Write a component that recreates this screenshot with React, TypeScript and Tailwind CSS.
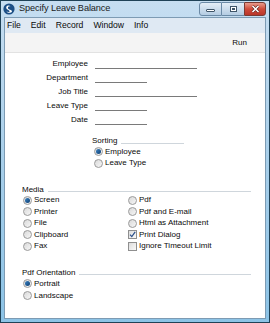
const font = { fontFamily: '"Liberation Sans", Arial, sans-serif' }

function Radio({ on }: { on?: boolean }) {
  return (
    <span className="flex h-[9px] w-[9px] shrink-0 items-center justify-center rounded-full border border-[#9a9a9a] bg-gradient-to-br from-[#d9d9d9] to-[#f7f7f7]">
      {on && <span className="h-[5px] w-[5px] rounded-full bg-gradient-to-br from-[#3b83c4] to-[#0e3f72]" />}
    </span>
  )
}

function Check({ on }: { on?: boolean }) {
  return (
    <span className="flex h-[9px] w-[9px] shrink-0 items-center justify-center border border-[#8f8f8f] bg-gradient-to-br from-[#dcdcdc] to-[#fafafa]">
      {on && (
        <svg width="7" height="7" viewBox="0 0 7 7">
          <path d="M1 3.6 L2.8 5.6 L6.2 0.8" fill="none" stroke="#2a4f8a" strokeWidth="1.2" />
        </svg>
      )}
    </span>
  )
}

function Option({ label, on, box }: { label: string; on?: boolean; box?: boolean }) {
  return (
    <div className="flex h-[11.4px] items-center gap-[2px]">
      {box ? <Check on={on} /> : <Radio on={on} />}
      <span className="whitespace-nowrap">{label}</span>
    </div>
  )
}

function Field({ label, long }: { label: string; long?: boolean }) {
  return (
    <div className="flex h-[14px] items-center">
      <span className="w-[83px] text-right">{label}</span>
      <div className={`ml-[7px] h-[9px] border-b border-[#7a7a7a] ${long ? 'w-[102px]' : 'w-[52px]'}`} />
    </div>
  )
}

function Group({ title, children }: { title: string; children: React.ReactNode }) {
  return (
    <div>
      <div className="flex h-[10px] items-center gap-[4px]">
        <span className="whitespace-nowrap">{title}</span>
        <div className="mt-[4px] h-px flex-1 bg-[#cfd6dc]" />
      </div>
      {children}
    </div>
  )
}

export default function App() {
  const menu = ['File', 'Edit', 'Record', 'Window', 'Info']

  return (
    <div className="flex h-[323px] w-[270px] flex-col border border-[#1f4257] bg-gradient-to-b from-[#c6def1] via-[#a8cfea] to-[#8cc3e6] text-[#0a0a0a]" style={font}>
      <div className="flex h-[16px] items-center pl-[2px] pr-[3px]">
        <svg width="12" height="12" viewBox="0 0 12 12">
          <circle cx="6" cy="6" r="5.6" fill="#1c4f86" />
          <path d="M3.2 4.2 C3.5 2.2 6.5 1.8 7.6 3.4 C6 2.9 4.6 3.6 5 5.2 C5.4 6.8 8.8 6.4 9 8.4 C8.2 10.2 4.8 10.4 3.4 8.6 C5 9.4 7 9 6.6 8 C6 6.8 3 6.6 3.2 4.2 Z" fill="#fff" />
        </svg>
        <span className="ml-[4px] text-[9.2px] tracking-[-0.1px] text-[#1a1a1a]">Specify Leave Balance</span>
        <div className="ml-auto flex h-[14px] items-stretch">
          <div className="flex w-[23px] items-center justify-center rounded-l-[3px] border border-[#6b8aa6] bg-gradient-to-b from-[#e4eef7] to-[#b4cce2]">
            <span className="mt-[3px] h-[3px] w-[9px] rounded-[1px] border border-[#3f5568] bg-white" />
          </div>
          <div className="flex w-[22px] items-center justify-center border-y border-[#6b8aa6] bg-gradient-to-b from-[#e4eef7] to-[#b4cce2]">
            <span className="h-[6px] w-[7px] border border-[#3f5568] bg-white">
              <span className="m-[1px] block h-[2px] w-[3px] border border-[#3f5568]" />
            </span>
          </div>
          <div className="flex w-[22px] items-center justify-center rounded-r-[3px] border border-[#7a3b33] bg-gradient-to-b from-[#e89a8c] via-[#cf4b3a] to-[#b9362a]">
            <svg width="9" height="8" viewBox="0 0 9 8">
              <path d="M1.5 1 L7.5 7 M7.5 1 L1.5 7" stroke="#5a1f1a" strokeWidth="2.6" />
              <path d="M1.5 1 L7.5 7 M7.5 1 L1.5 7" stroke="#fff" strokeWidth="1.6" />
            </svg>
          </div>
        </div>
      </div>

      <div className="mx-[3px] mb-[3px] flex flex-1 flex-col border border-[#7d9bb3] text-[8px]">
        <div className="flex h-[15px] items-center gap-[10px] bg-[#dfe9f3] pl-[2px] text-[8.6px]">
          {menu.map((m) => (
            <span key={m}>{m}</span>
          ))}
        </div>
        <div className="flex h-[20px] items-center justify-end border-b border-[#e2e2e2] bg-[#f4f4f4] pr-[18px]">
          <span>Run</span>
        </div>

        <div className="flex-1 bg-white pt-[4px]">
          <Field label="Employee" long />
          <Field label="Department" />
          <Field label="Job Title" long />
          <Field label="Leave Type" />
          <Field label="Date" />

          <div className="ml-[87px] mt-[9px] w-[92px]">
            <Group title="Sorting">
              <div className="pl-[2px]">
                <Option label="Employee" on />
                <Option label="Leave Type" />
              </div>
            </Group>
          </div>

          <div className="ml-[17px] mr-[14px] mt-[16px]">
            <Group title="Media">
              <div className="grid grid-cols-[105px_1fr] pl-[1px]">
                <div>
                  <Option label="Screen" on />
                  <Option label="Printer" />
                  <Option label="File" />
                  <Option label="Clipboard" />
                  <Option label="Fax" />
                </div>
                <div>
                  <Option label="Pdf" />
                  <Option label="Pdf and E-mail" />
                  <Option label="Html as Attachment" />
                  <Option label="Print Dialog" box on />
                  <Option label="Ignore Timeout Limit" box />
                </div>
              </div>
            </Group>
          </div>

          <div className="ml-[17px] mr-[14px] mt-[16px]">
            <Group title="Pdf Orientation">
              <div className="pl-[1px]">
                <div className="flex h-[12px] items-center gap-[2px]">
                  <Radio on />
                  <span>Portrait</span>
                </div>
                <div className="flex h-[12px] items-center gap-[2px]">
                  <Radio />
                  <span>Landscape</span>
                </div>
              </div>
            </Group>
          </div>
        </div>
      </div>
    </div>
  )
}
